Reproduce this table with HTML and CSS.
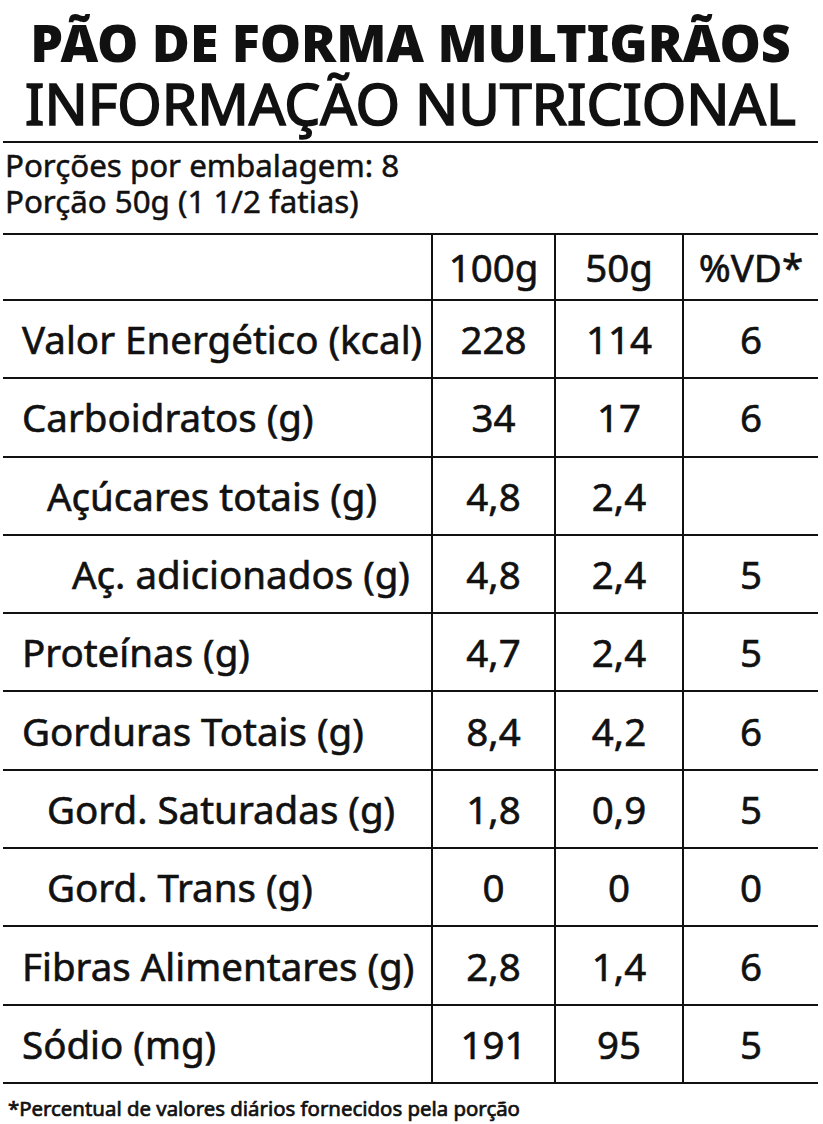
FILE: index.html
```html
<!DOCTYPE html>
<html lang="pt-BR">
<head>
<meta charset="utf-8">
<title>Pão de Forma Multigrãos - Informação Nutricional</title>
<link rel="stylesheet" href="styles.css">
</head>
<body>
<main class="label">
  <header class="title">
    <h1 class="title-product">PÃO DE FORMA MULTIGRÃOS</h1>
    <h2 class="title-info">INFORMAÇÃO NUTRICIONAL</h2>
  </header>
  <section class="serving">
    <p>Porções por embalagem: 8</p>
    <p>Porção 50g (1 1/2 fatias)</p>
  </section>
  <table class="facts">
    <colgroup>
      <col class="c-name">
      <col class="c-100">
      <col class="c-50">
      <col class="c-vd">
    </colgroup>
    <thead>
      <tr>
        <th></th>
        <th>100g</th>
        <th>50g</th>
        <th>%VD*</th>
      </tr>
    </thead>
    <tbody>
      <tr><td class="name">Valor Energético (kcal)</td><td>228</td><td>114</td><td>6</td></tr>
      <tr><td class="name">Carboidratos (g)</td><td>34</td><td>17</td><td>6</td></tr>
      <tr><td class="name sub">Açúcares totais (g)</td><td>4,8</td><td>2,4</td><td></td></tr>
      <tr><td class="name subsub">Aç. adicionados (g)</td><td>4,8</td><td>2,4</td><td>5</td></tr>
      <tr><td class="name">Proteínas (g)</td><td>4,7</td><td>2,4</td><td>5</td></tr>
      <tr><td class="name">Gorduras Totais (g)</td><td>8,4</td><td>4,2</td><td>6</td></tr>
      <tr><td class="name sub">Gord. Saturadas (g)</td><td>1,8</td><td>0,9</td><td>5</td></tr>
      <tr><td class="name sub">Gord. Trans (g)</td><td>0</td><td>0</td><td>0</td></tr>
      <tr><td class="name">Fibras Alimentares (g)</td><td>2,8</td><td>1,4</td><td>6</td></tr>
      <tr><td class="name">Sódio (mg)</td><td>191</td><td>95</td><td>5</td></tr>
    </tbody>
  </table>
  <p class="footnote">*Percentual de valores diários fornecidos pela porção</p>
</main>
</body>
</html>
```
FILE: styles.css
```css
html, body {
  margin: 0;
  padding: 0;
  background: #ffffff;
}

body {
  font-family: "Noto Sans", "Open Sans", sans-serif;
  color: #111111;
}

.label {
  width: 815px;
  padding-left: 3px;
}

.title {
  text-align: center;
  border-bottom: 2px solid #111111;
  padding-bottom: 9px;
}

.title-product {
  margin: 0;
  padding-top: 9px;
  font-size: 52px;
  line-height: 65px;
  font-weight: 900;
  letter-spacing: -0.1px;
}

.title-info {
  margin: 0;
  font-size: 57px;
  line-height: 58px;
  font-weight: 400;
  -webkit-text-stroke: 1.7px #111111;
}

.serving {
  padding-top: 4px;
  padding-bottom: 14px;
}

.serving p {
  margin: 0;
  padding-left: 2px;
  font-size: 31.3px;
  line-height: 36px;
  -webkit-text-stroke: 0.5px #111111;
}

.facts {
  width: 815px;
  border-collapse: collapse;
  table-layout: fixed;
  border-top: 2px solid #111111;
  border-bottom: 2px solid #111111;
}

.c-name { width: 429px; }
.c-100 { width: 123px; }
.c-50 { width: 128px; }
.c-vd { width: 135px; }

.facts th,
.facts td {
  padding: 0;
  font-size: 38.5px;
  font-weight: 400;
  text-align: center;
  vertical-align: middle;
  border-left: 2px solid #111111;
  border-bottom: 2px solid #111111;
  -webkit-text-stroke: 0.6px #111111;
}

.facts th:first-child,
.facts td:first-child {
  border-left: none;
}

.facts th {
  height: 64px;
}

.facts td {
  height: 76.3px;
}

.facts td.name {
  text-align: left;
  padding-left: 19px;
  white-space: nowrap;
}

.facts td.sub {
  padding-left: 44px;
}

.facts td.subsub {
  padding-left: 69px;
}

.footnote {
  margin: 0;
  padding: 10px 0 0 5px;
  font-size: 20.4px;
  font-weight: 400;
  -webkit-text-stroke: 0.7px #111111;
}
```
